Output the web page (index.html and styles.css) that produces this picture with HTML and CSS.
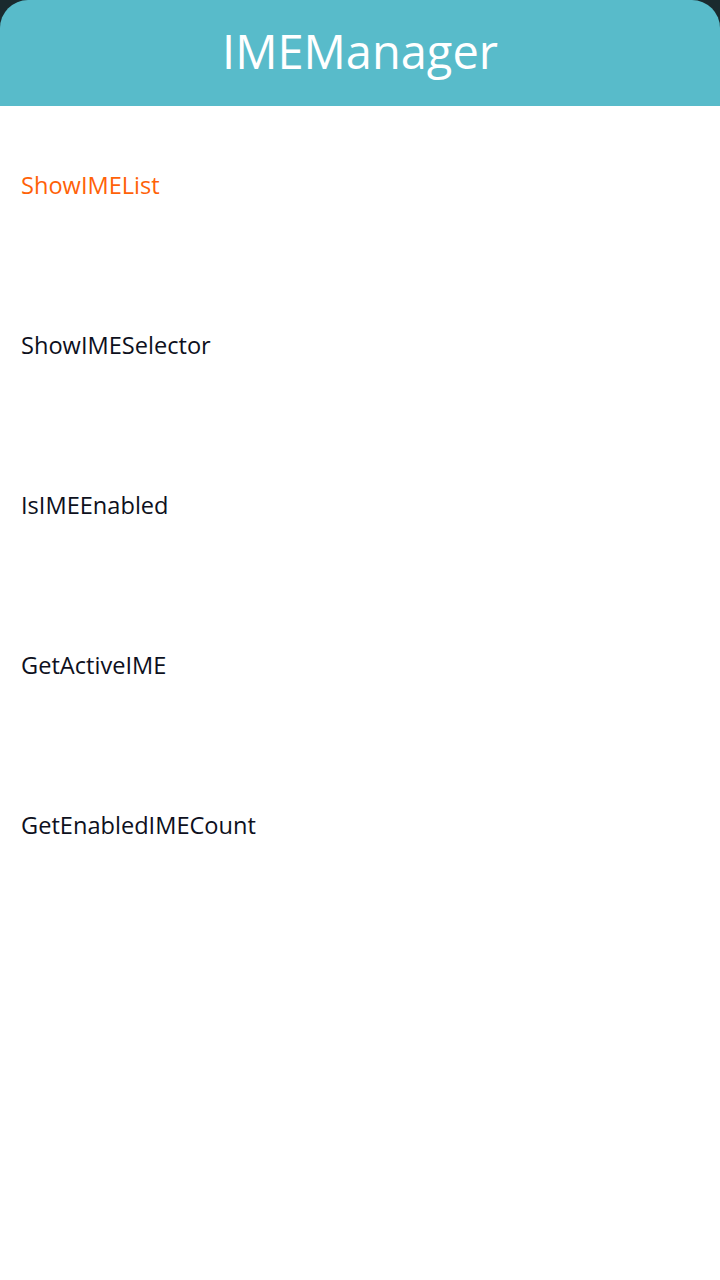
FILE: index.html
```html
<!DOCTYPE html>
<html>
<head>
<meta charset="utf-8">
<link rel="stylesheet" href="styles.css">
</head>
<body>
<div class="page">
  <div class="header-wrap">
    <header class="header"><h1 class="title">IMEManager</h1></header>
  </div>
  <ul class="list">
    <li class="item active">ShowIMEList</li>
    <li class="item">ShowIMESelector</li>
    <li class="item">IsIMEEnabled</li>
    <li class="item">GetActiveIME</li>
    <li class="item">GetEnabledIMECount</li>
  </ul>
</div>
</body>
</html>
```
FILE: styles.css
```css
html, body {
  margin: 0;
  padding: 0;
  background: #ffffff;
}
.page {
  width: 720px;
  height: 1280px;
  background: #ffffff;
  font-family: "Open Sans", "DejaVu Sans", sans-serif;
}
.header-wrap {
  background: #1a2a2e;
}
.header {
  height: 106px;
  background: #58bbca;
  border-radius: 28px 28px 0 0;
  display: flex;
  align-items: center;
  justify-content: center;
}
.title {
  margin: 0;
  color: #ffffff;
  font-weight: 400;
  font-size: 47px;
  letter-spacing: 0;
  padding-bottom: 4px;
}
.list {
  list-style: none;
  margin: 0;
  padding: 0;
}
.item {
  height: 160px;
  display: flex;
  align-items: center;
  padding-left: 21px;
  padding-bottom: 2px;
  box-sizing: border-box;
  font-size: 23.6px;
  color: #0d1020;
}
.item.active {
  color: #ff6208;
}
```
